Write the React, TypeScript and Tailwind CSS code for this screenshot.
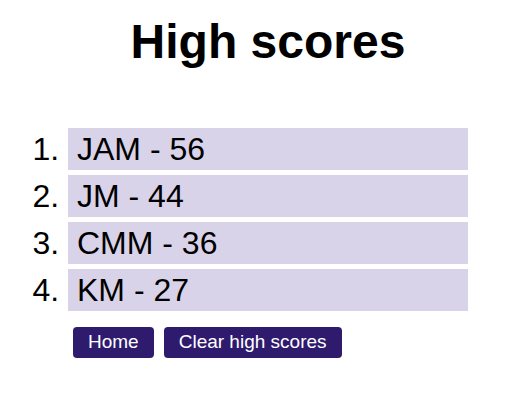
const SCORES = [
  { name: "JAM", score: 56 },
  { name: "JM", score: 44 },
  { name: "CMM", score: 36 },
  { name: "KM", score: 27 },
];

const App = () => {
  return (
    <div
      className="min-h-[409px] bg-white pl-[20px] text-black"
      style={{ fontFamily: '"Liberation Sans", Arial, sans-serif' }}
    >
      <h1 className="pt-[14px] text-center text-[48px] font-bold leading-[55px]">
        High scores
      </h1>
      <ol className="mx-auto mt-[59px] flex w-[400px] list-outside list-decimal flex-col gap-[5px] text-[32px]">
        {SCORES.map((s) => (
          <li
            key={s.name}
            className="list-item bg-[#d8d3e8] py-[3px] pl-[9px] leading-[36px]"
          >
            {s.name} - {s.score}
          </li>
        ))}
      </ol>
      <div className="mx-auto mt-[11px] w-[400px]">
        <button className="m-[5px] h-[31px] cursor-pointer rounded-[4px] bg-[#2f1b6e] px-[15px] text-[19px] text-white">
          Home
        </button>
        <button className="m-[5px] h-[31px] cursor-pointer rounded-[4px] bg-[#2f1b6e] px-[15px] text-[19px] text-white">
          Clear high scores
        </button>
      </div>
    </div>
  );
};

export default App;
